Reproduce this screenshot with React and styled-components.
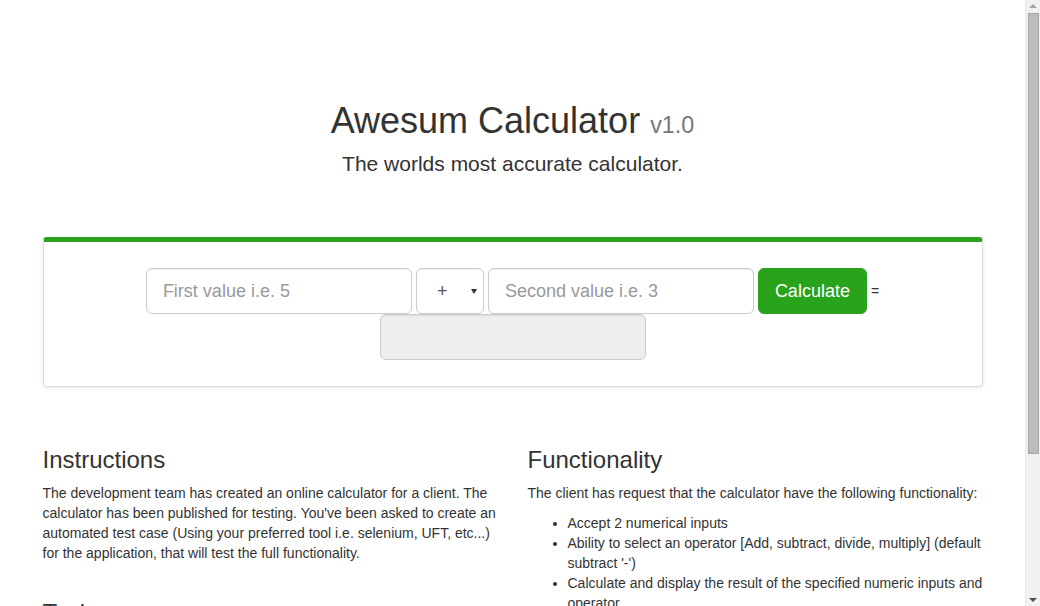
import React from "react";
import styled, { createGlobalStyle } from "styled-components";

const GREEN = "#29a21c";

const Global = createGlobalStyle`
  * { box-sizing: border-box; }
  html, body { margin: 0; padding: 0; overflow: hidden; }
  body {
    font-family: "Liberation Sans", Arial, Helvetica, sans-serif;
    font-size: 14px;
    line-height: 20px;
    color: #333;
    background: #fff;
  }
`;

const Page = styled.div`
  display: flex;
  height: 100vh;
  overflow: hidden;
`;

const Viewport = styled.main`
  flex: 1;
  min-width: 0;
  overflow: hidden;
`;

const ScrollBar = styled.div`
  width: 15px;
  flex: none;
  display: flex;
  flex-direction: column;
  align-items: center;
  background: #f1f1f1;
  border-left: 1px solid #e8e8e8;
`;

const Arrow = styled.div`
  flex: none;
  height: 12px;
  width: 100%;
  display: flex;
  align-items: center;
  justify-content: center;
  &::before {
    content: "";
    width: 0;
    height: 0;
    border-left: 4px solid transparent;
    border-right: 4px solid transparent;
    ${(p) =>
      p.$down
        ? `border-top: 4px solid ${p.$color};`
        : `border-bottom: 4px solid ${p.$color};`}
  }
`;

const Thumb = styled.div`
  flex: none;
  width: 11px;
  height: 441px;
  margin-top: 1px;
  background: #bcbcbc;
  border: 1px solid #a8a8a8;
`;

const Track = styled.div`
  flex: 1;
`;

const Container = styled.div`
  width: 970px;
  margin: 0 auto;
  padding: 0 15px 190px;
`;

const Header = styled.header`
  padding-top: 101px;
  text-align: center;
`;

const Title = styled.h1`
  margin: 0 0 8px;
  font-size: 36px;
  line-height: 1.1;
  font-weight: 500;
  color: #333;
`;

const Version = styled.small`
  font-size: 65%;
  font-weight: 400;
  color: #777;
`;

const Lead = styled.p`
  margin: 0;
  font-size: 21px;
  line-height: 1.4;
  font-weight: 300;
`;

const Panel = styled.section`
  margin-top: 59px;
  background: #fff;
  border: 1px solid #ddd;
  border-top: 5px solid ${GREEN};
  border-radius: 4px;
  box-shadow: 0 1px 4px rgba(0, 0, 0, 0.1);
  padding: 26px 15px;
`;

const Form = styled.form`
  display: flex;
  flex-wrap: wrap;
  justify-content: center;
  align-items: center;
  column-gap: 4px;
  row-gap: 0;
`;

const Input = styled.input`
  width: 266px;
  height: 46px;
  padding: 11px 16px 9px;
  font-family: inherit;
  font-size: 18px;
  line-height: 1.3333;
  color: #555;
  background: ${(p) => (p.readOnly ? "#eee" : "#fff")};
  border: 1px solid #ccc;
  border-radius: 6px;
  box-shadow: inset 0 1px 1px rgba(0, 0, 0, 0.075);
  outline: none;
  &::placeholder { color: #999; }
`;

const SelectWrap = styled.div`
  position: relative;
  width: 68px;
  height: 46px;
`;

const Select = styled.select`
  appearance: none;
  -webkit-appearance: none;
  width: 100%;
  height: 100%;
  padding: 0 0 0 20px;
  font-family: inherit;
  font-size: 18px;
  color: #555;
  background: #fff;
  border: 1px solid #ccc;
  border-radius: 6px;
  box-shadow: inset 0 1px 1px rgba(0, 0, 0, 0.075);
  outline: none;
`;

const Caret = styled.span`
  position: absolute;
  right: 7px;
  top: 21px;
  width: 0;
  height: 0;
  border-left: 3px solid transparent;
  border-right: 3px solid transparent;
  border-top: 5px solid #333;
  pointer-events: none;
`;

const Button = styled.button`
  height: 46px;
  padding: 11px 16px 9px;
  font-family: inherit;
  font-size: 18px;
  line-height: 1.3333;
  color: #fff;
  background: ${GREEN};
  border: 1px solid ${GREEN};
  border-radius: 6px;
  cursor: pointer;
`;

const Equals = styled.span`
  font-size: 14px;
  line-height: 20px;
  color: #333;
`;

const Columns = styled.div`
  margin-top: 40px;
  display: grid;
  grid-template-columns: 1fr 1fr;
  column-gap: 30px;
`;

const Column = styled.div``;

const Heading = styled.h3`
  margin: ${(p) => (p.$spaced ? "37px" : "20px")} 0 10px;
  font-size: 24px;
  line-height: 1.1;
  font-weight: 500;
  color: #333;
`;

const Para = styled.p`
  margin: 0 0 10px;
`;

const List = styled.ul`
  margin: 0 0 10px;
  padding-left: 40px;
`;

export default function App() {
  return (
    <>
      <Global />
      <Page>
        <Viewport>
          <Container>
            <Header>
              <Title>
                Awesum Calculator <Version>v1.0</Version>
              </Title>
              <Lead>The worlds most accurate calculator.</Lead>
            </Header>

            <Panel>
              <Form onSubmit={(e) => e.preventDefault()}>
                <Input type="text" placeholder="First value i.e. 5" />
                <SelectWrap>
                  <Select defaultValue="+">
                    <option value="+">+</option>
                    <option value="-">-</option>
                    <option value="/">/</option>
                    <option value="*">*</option>
                  </Select>
                  <Caret />
                </SelectWrap>
                <Input type="text" placeholder="Second value i.e. 3" />
                <Button type="submit">Calculate</Button>
                <Equals>=</Equals>
                <Input type="text" readOnly />
              </Form>
            </Panel>

            <Columns>
              <Column>
                <Heading>Instructions</Heading>
                <Para>
                  The development team has created an online calculator for a
                  client. The calculator has been published for testing. You've
                  been asked to create an automated test case (Using your
                  preferred tool i.e. selenium, UFT, etc...) for the
                  application, that will test the full functionality.
                </Para>
                <Heading $spaced>Tasks</Heading>
              </Column>
              <Column>
                <Heading>Functionality</Heading>
                <Para>
                  The client has request that the calculator have the following
                  functionality:
                </Para>
                <List>
                  <li>Accept 2 numerical inputs</li>
                  <li>
                    Ability to select an operator [Add, subtract, divide,
                    multiply] (default subtract '-')
                  </li>
                  <li>
                    Calculate and display the result of the specified numeric
                    inputs and operator
                  </li>
                </List>
              </Column>
            </Columns>
          </Container>
        </Viewport>
        <ScrollBar aria-hidden="true">
          <Arrow $color="#a3a3a3" />
          <Thumb />
          <Track />
          <Arrow $down $color="#505050" />
        </ScrollBar>
      </Page>
    </>
  );
}
